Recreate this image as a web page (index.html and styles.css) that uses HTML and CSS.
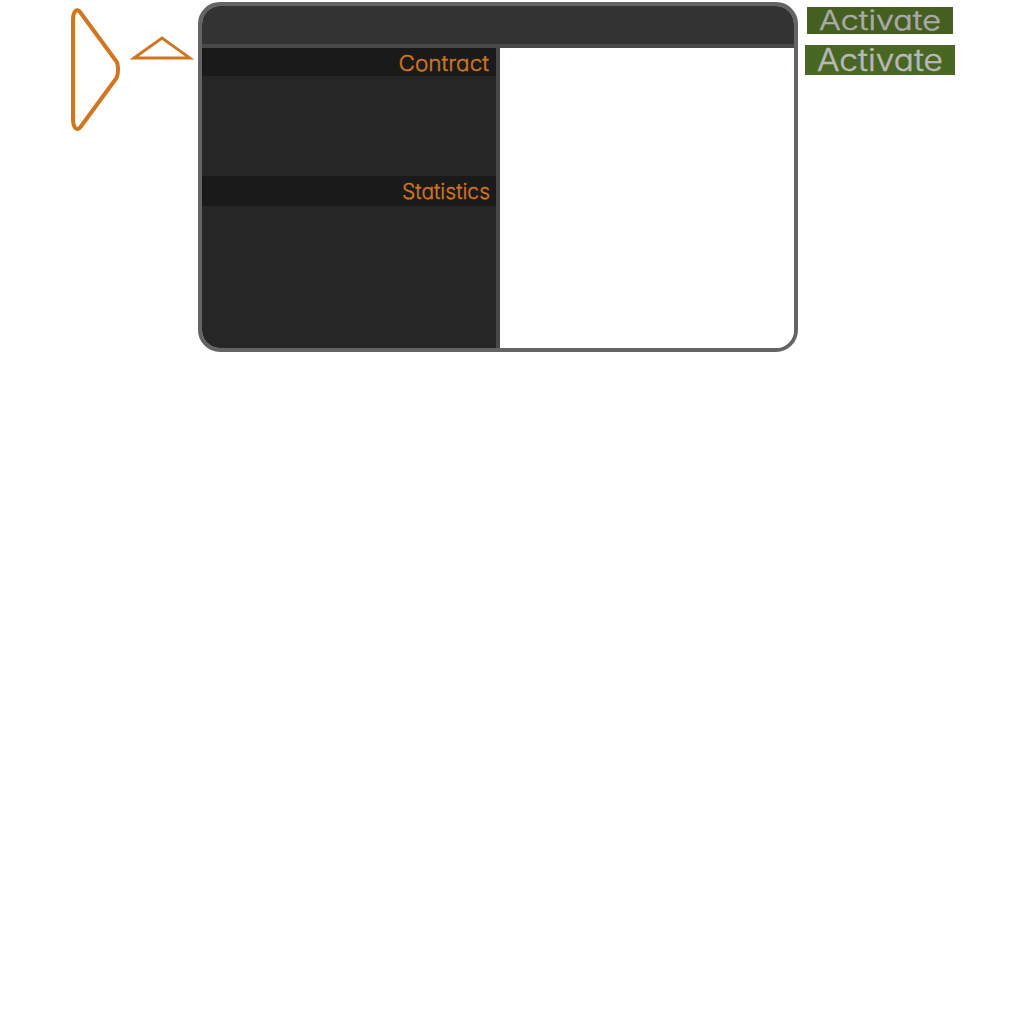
FILE: index.html
```html
<!DOCTYPE html>
<html lang="en">
<head>
<meta charset="utf-8">
<title>Contracts</title>
<link rel="stylesheet" href="styles.css">
</head>
<body>
<main class="layout">
  <svg class="arrows" viewBox="0 0 130 140" aria-hidden="true">
    <path class="arrow-next" d="M5 20C5 11 9 8 12 12L47 59.500C51 63 51 76 47 80L12.500 127C9 131.500 5 128 5 119Z"/>
    <path class="arrow-up" d="M66 58L94 38L122 58Z"/>
  </svg>
  <section class="panel">
    <header class="panel-header"></header>
    <div class="panel-body">
      <div class="sidebar">
        <h2 class="heading"><svg class="label" viewBox="0 0 294 28"><text x="196.500" y="22.700" textLength="90.500" lengthAdjust="spacingAndGlyphs">Contract</text></svg></h2>
        <div class="contract"></div>
        <h2 class="heading heading-stats"><svg class="label" viewBox="0 0 294 30"><text x="200" y="22.700" textLength="88" lengthAdjust="spacingAndGlyphs">Statistics</text></svg></h2>
        <div class="statistics"></div>
      </div>
      <div class="content"></div>
    </div>
  </section>
  <div class="actions">
    <button class="activate activate-small"><svg class="label" viewBox="0 0 146 27"><text x="12" y="22.500" textLength="122" lengthAdjust="spacingAndGlyphs">Activate</text></svg></button>
    <button class="activate"><svg class="label" viewBox="0 0 150 30"><text x="12" y="25.600" textLength="126" lengthAdjust="spacingAndGlyphs">Activate</text></svg></button>
  </div>
</main>
</body>
</html>
```
FILE: styles.css
```css
* { box-sizing: border-box; }
body { margin: 0; background: #fefefe; font-family: Inter, Lato, sans-serif; }
.layout { display: flex; align-items: flex-start; padding-left: 68px; }
.arrows { width: 130px; height: 140px; fill: none; stroke: #cf761f; flex: none; }
.arrow-next { stroke-width: 4; stroke-linejoin: round; }
.arrow-up { stroke-width: 2.8; }
.panel {
  display: flex; flex-direction: column; flex: none;
  width: 600px; height: 350px; margin-top: 2px;
  border: 4px solid #646464; border-radius: 22px;
  overflow: hidden;
}
.panel-header { height: 42px; background: #333; border-bottom: 4px solid #484848; }
.panel-body { display: flex; flex: 1; }
.sidebar { display: flex; flex-direction: column; width: 298px; background: #262626; border-right: 4px solid #484848; }
.heading { height: 28px; margin: 0; background: #1a1a1a; }
.heading-stats { height: 30px; }
.contract { height: 100px; }
.statistics { flex: 1; }
.content { flex: 1; background: #fefefe; }
.label { display: block; width: 100%; height: 100%; overflow: visible; }
.label text { font-weight: 300; font-feature-settings: "cv11"; }
.heading text { font-size: 21.5px; fill: #cf761f; stroke: #cf761f; stroke-width: .4; }
.actions { display: flex; flex-direction: column; align-items: center; gap: 11px; padding: 7px 0 0 7px; }
.activate { width: 150px; height: 30px; padding: 0; border: 0; background: #496623; font-family: inherit; overflow: visible; }
.activate text { font-size: 31px; fill: #b9b9b9; stroke: #b9b9b9; stroke-width: .5; }
.activate-small { width: 146px; height: 27px; background: #445f20; }
.activate-small text { font-size: 27.5px; fill: #aaa; stroke: #aaa; }
```
